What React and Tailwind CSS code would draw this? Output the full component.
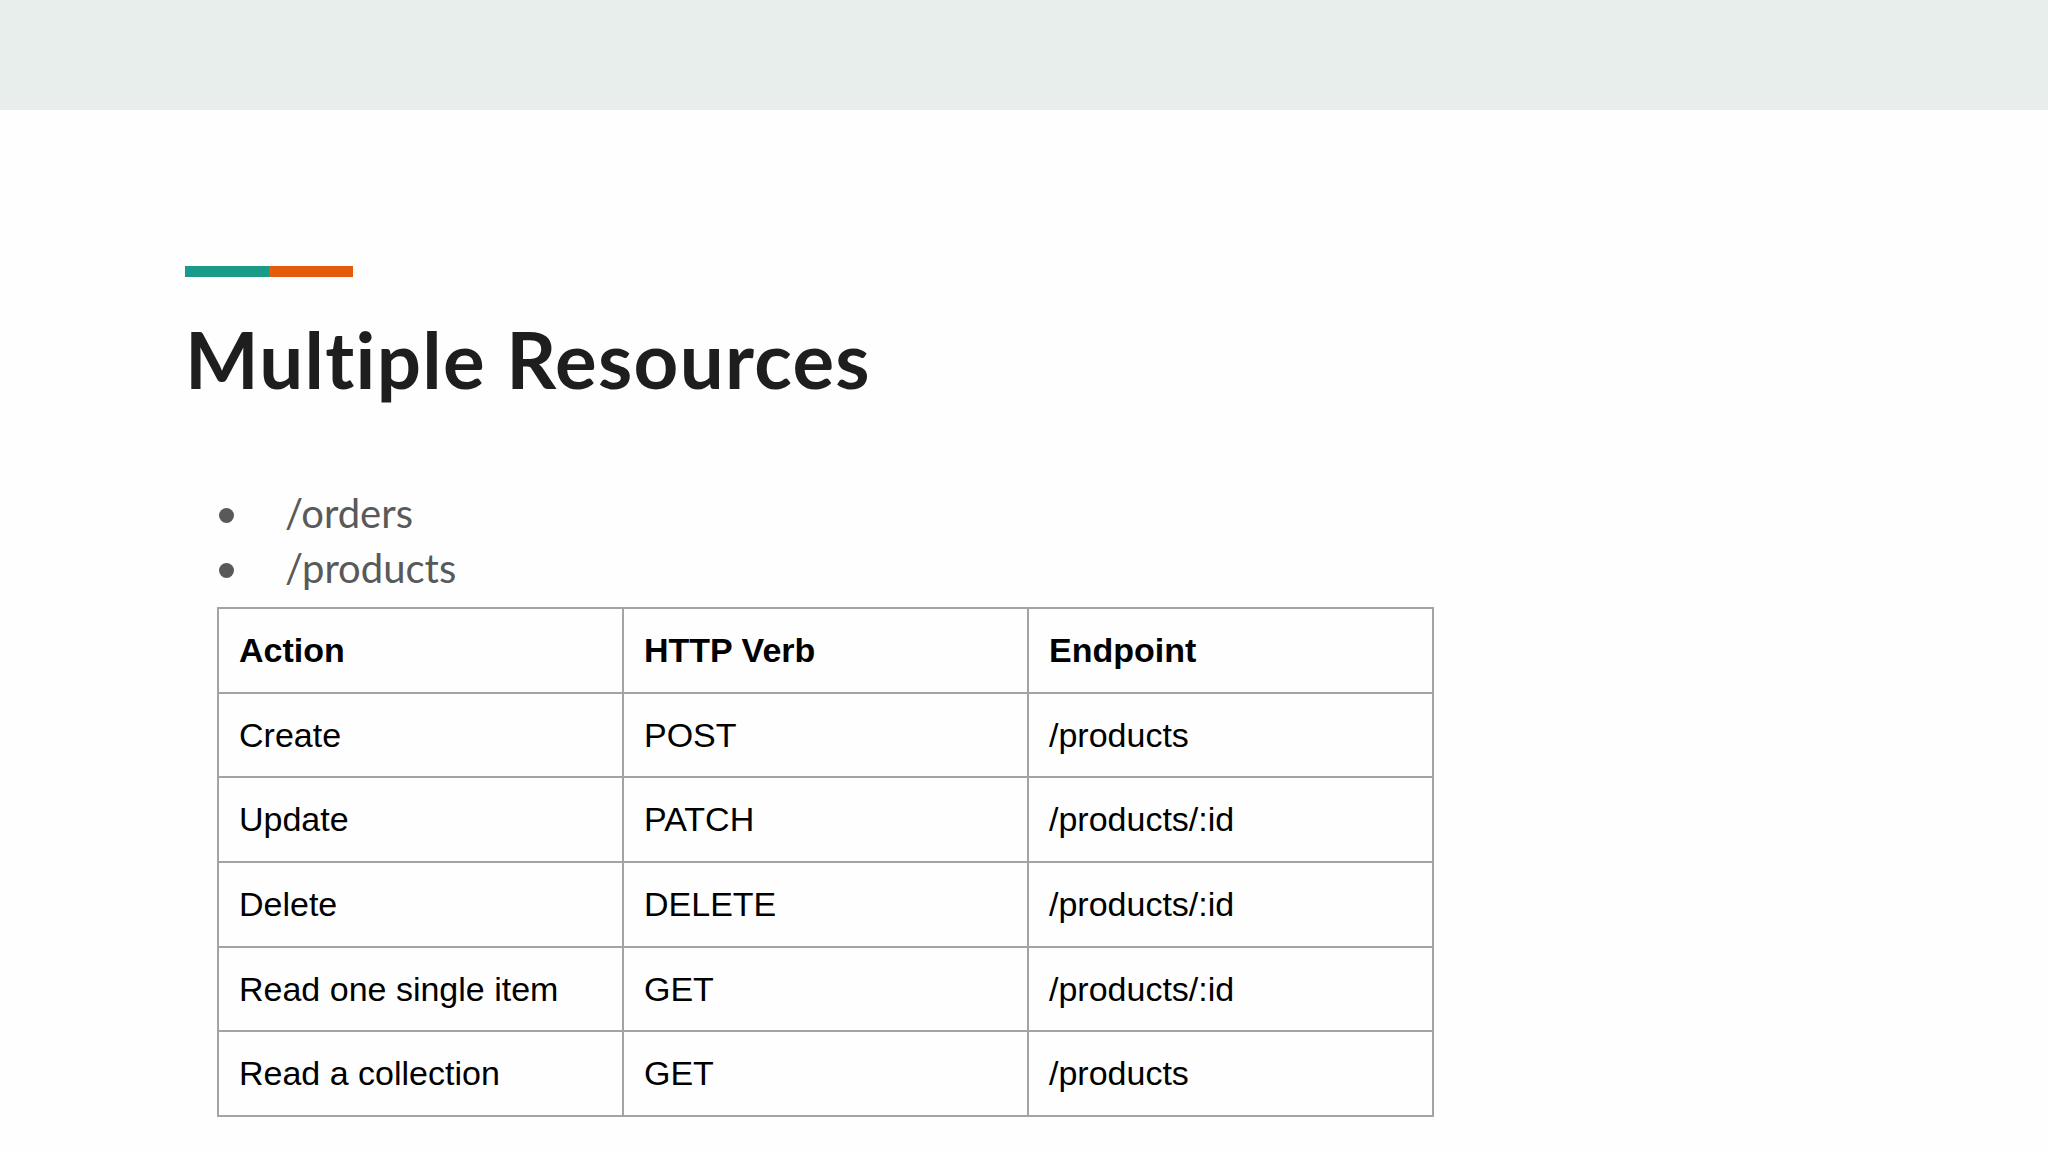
const rows = [
    { action: "Create", verb: "POST", endpoint: "/products" },
    { action: "Update", verb: "PATCH", endpoint: "/products/:id" },
    { action: "Delete", verb: "DELETE", endpoint: "/products/:id" },
    { action: "Read one single item", verb: "GET", endpoint: "/products/:id" },
    { action: "Read a collection", verb: "GET", endpoint: "/products" },
];

const cell = "h-[84.7px] border-2 border-[#a3a3a3] pl-[20px] align-middle";

export default function App() {
    return (
        <div className="w-[2048px] h-[1152px] overflow-hidden bg-[#fefefe]">
            <div className="h-[110px] bg-[#e8eeec]" />

            <div className="pl-[185px] pt-[156px]">
                {/* accent bar */}
                <div className="flex h-[11px] w-[168px]">
                    <div className="flex-1 bg-[#1a9a89]" />
                    <div className="flex-1 bg-[#e55a0b]" />
                </div>

                <h1 className="mt-[43px] text-[78px] leading-[78px] font-bold tracking-[1.3px] text-[#1e1e1e] font-['Lato',sans-serif]">
                    Multiple Resources
                </h1>

                <ul className="mt-[88px] pl-[34px] font-['Lato',sans-serif] text-[40px] leading-[55px] text-[#595959]">
                    {["/orders", "/products"].map((item) => (
                        <li key={item} className="flex items-center">
                            <span className="w-[15px] h-[15px] rounded-full bg-[#595959] mr-[51px] mt-[4px]" />
                            {item}
                        </li>
                    ))}
                </ul>

                <table className="mt-[11px] ml-[32px] w-[1217px] table-fixed border-collapse font-['Liberation_Sans',Arial,sans-serif] text-[34px] text-black">
                    <thead>
                        <tr>
                            <th className={`${cell} text-left font-bold`}>Action</th>
                            <th className={`${cell} text-left font-bold`}>HTTP Verb</th>
                            <th className={`${cell} text-left font-bold`}>Endpoint</th>
                        </tr>
                    </thead>
                    <tbody>
                        {rows.map((row) => (
                            <tr key={row.action}>
                                <td className={cell}>{row.action}</td>
                                <td className={cell}>{row.verb}</td>
                                <td className={cell}>{row.endpoint}</td>
                            </tr>
                        ))}
                    </tbody>
                </table>
            </div>
        </div>
    );
}
